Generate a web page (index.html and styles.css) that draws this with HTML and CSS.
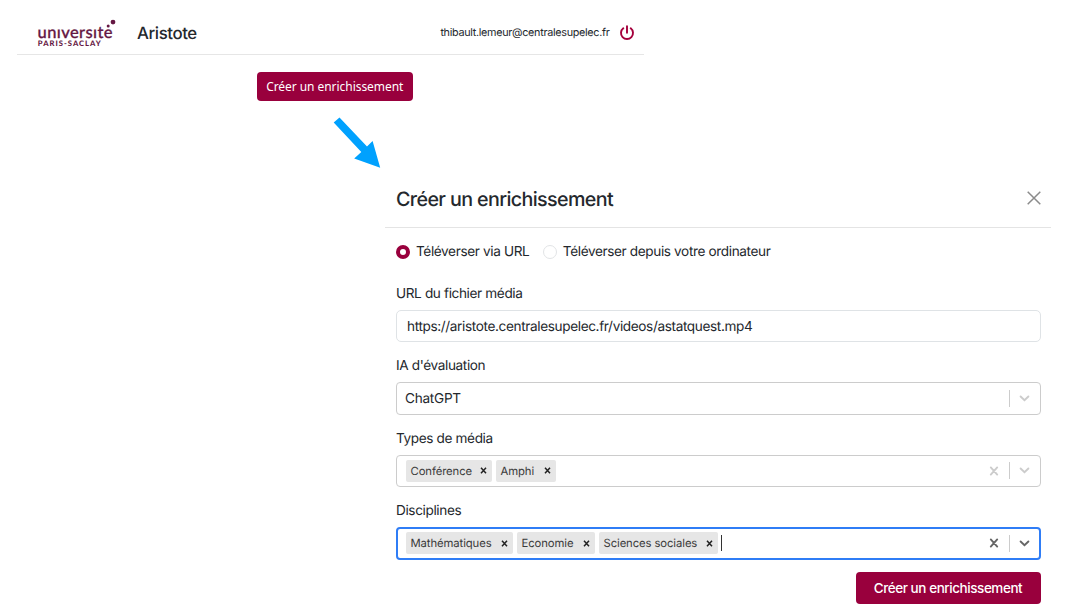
FILE: index.html
```html
<!DOCTYPE html>
<html lang="fr">
<head>
<meta charset="utf-8">
<title>Aristote</title>
<link rel="stylesheet" href="styles.css">
</head>
<body>
<section class="home">
  <header class="topbar">
    <svg class="logo" width="80" height="30" viewBox="0 0 80 30" role="img" aria-label="université Paris-Saclay">
      <text class="logo-name" x="0.5" y="20" textLength="75" lengthAdjust="spacing">unıversıte</text>
      <text class="logo-place" x="0.8" y="28" textLength="63" lengthAdjust="spacing">PARIS-SACLAY</text>
      <circle cx="76" cy="4.1" r="2.4"/>
      <circle cx="71.2" cy="8" r="1.5"/>
    </svg>
    <span class="brand">Aristote</span>
    <span class="email">thibault.lemeur@centralesupelec.fr</span>
    <svg class="power" width="16" height="16" viewBox="0 0 16 16"><path d="M8 1.2v6.6M4.3 3.3a6 6 0 1 0 7.4 0"/></svg>
  </header>
  <button class="btn btn-home" type="button"><span>Créer un enrichissement</span></button>
  <svg class="arrow" width="52" height="54" viewBox="0 0 52 54"><path d="M6.5 3.5l27.5 29 5.6-5.6L47.2 53.7 21.2 44.6 28.3 38 .7 8.5z"/></svg>
</section>

<section class="modal">
  <header class="modal-head">
    <h1>Créer un enrichissement</h1>
    <svg class="close" width="14" height="14" viewBox="0 0 14 14"><path d="M.7.7l12.6 12.6M13.3.7L.7 13.3"/></svg>
  </header>
  <form class="form">
    <div class="radios">
      <i class="radio checked"></i><span>Téléverser via URL</span>
      <i class="radio second"></i><span>Téléverser depuis votre ordinateur</span>
    </div>

    <label>URL du fichier média</label>
    <div class="field input"><span>https://aristote.centralesupelec.fr/videos/astatquest.mp4</span></div>

    <label>IA d'évaluation</label>
    <div class="field select">
      <span class="value">ChatGPT</span>
      <div class="tools"><i class="sep"></i><svg class="chev" width="11" height="7" viewBox="0 0 11 7"><path d="M1.6 1.5l3.9 3.6 3.9-3.6"/></svg></div>
    </div>

    <label>Types de média</label>
    <div class="field select">
      <div class="tag t1"><span>Conférence</span><svg width="7" height="7" viewBox="0 0 7 7"><path d="M1 .8l5 5.4M6 .8l-5 5.4"/></svg></div>
      <div class="tag t2"><span>Amphi</span><svg width="7" height="7" viewBox="0 0 7 7"><path d="M1 .8l5 5.4M6 .8l-5 5.4"/></svg></div>
      <div class="tools"><svg class="clear" width="10" height="10" viewBox="0 0 10 10"><path d="M1.8 1.4l6.4 7.2M8.2 1.4L1.8 8.6"/></svg><i class="sep"></i><svg class="chev" width="11" height="7" viewBox="0 0 11 7"><path d="M1.6 1.5l3.9 3.6 3.9-3.6"/></svg></div>
    </div>

    <label>Disciplines</label>
    <div class="field select focus">
      <div class="tag t3"><span>Mathématiques</span><svg width="7" height="7" viewBox="0 0 7 7"><path d="M1 .8l5 5.4M6 .8l-5 5.4"/></svg></div>
      <div class="tag t4"><span>Economie</span><svg width="7" height="7" viewBox="0 0 7 7"><path d="M1 .8l5 5.4M6 .8l-5 5.4"/></svg></div>
      <div class="tag t5"><span>Sciences sociales</span><svg width="7" height="7" viewBox="0 0 7 7"><path d="M1 .8l5 5.4M6 .8l-5 5.4"/></svg></div>
      <i class="caret"></i>
      <div class="tools"><svg class="clear" width="10" height="10" viewBox="0 0 10 10"><path d="M1.8 1.4l6.4 7.2M8.2 1.4L1.8 8.6"/></svg><i class="sep"></i><svg class="chev" width="11" height="7" viewBox="0 0 11 7"><path d="M1.6 1.5l3.9 3.6 3.9-3.6"/></svg></div>
    </div>
    <button class="btn btn-submit" type="button"><span>Créer un enrichissement</span></button>
  </form>
</section>
</body>
</html>
```
FILE: styles.css
```css
* { box-sizing: border-box; }
body {
  margin: 0;
  width: 1080px;
  height: 608px;
  overflow: hidden;
  background: #fff;
  color: #24282d;
  font: 13.6px/20px Inter, "Liberation Sans", sans-serif;
  letter-spacing: -0.37px;
  text-rendering: geometricPrecision;
  white-space: nowrap;
}
svg { display: block; flex: none; fill: none; }
i { display: block; flex: none; }

.home { position: relative; width: 661px; height: 174px; padding: 12px 17px 0; }
.topbar {
  display: flex;
  align-items: center;
  height: 43px;
  padding: 0 9.5px 0 20px;
  border-bottom: 1px solid #e6e6e6;
}
.logo { fill: #651743; align-self: flex-start; margin: 6px 0 0; letter-spacing: 0; }
.logo-name { font: 500 16.5px/1 Lato, sans-serif; stroke: #651743; stroke-width: 0.3; }
.logo-place { font: 900 7.6px/1 Lato, sans-serif; }
.brand { margin-left: 20px; padding-top: 1px; font-size: 16.8px; font-weight: 500; letter-spacing: -0.4px; }
.email { margin-left: auto; font-size: 10.8px; letter-spacing: -0.3px; }
.power { margin-left: 9px; stroke: #a5003c; stroke-width: 1.9; stroke-linecap: round; }

.btn {
  display: flex;
  align-items: center;
  justify-content: center;
  padding: 0;
  border: 0;
  border-radius: 4px;
  background: #99003d;
  color: #fff;
}
.btn-home { width: 156.5px; height: 28.5px; margin: 17.3px 0 0 239.5px; font: 12px "Noto Sans", sans-serif; letter-spacing: -0.05px; }
.arrow { position: absolute; left: 333px; top: 114px; fill: #00a1fe; }

.modal { width: 666px; margin-left: 385px; }
.modal-head {
  display: flex;
  align-items: center;
  justify-content: space-between;
  height: 54px;
  padding: 0 10px 5px 11px;
  border-bottom: 1px solid #e4e4e4;
}
h1 { margin: 0; padding-top: 1px; font-size: 19.7px; line-height: 26px; font-weight: 500; letter-spacing: -0.62px; }
.close { stroke: #8b8b8b; stroke-width: 1.5; }
.form { display: flex; flex-direction: column; padding: 13.5px 10px 0 11px; }
.radios { display: flex; align-items: center; height: 20px; margin-bottom: 22px; }
.radios span { padding-top: 1px; }
.radio { width: 14px; height: 14px; margin-right: 6px; border: 1px solid #e2e4e6; border-radius: 50%; }
.checked { border: 4px solid #99003d; }
.second { margin-left: 13.5px; }
label { height: 20px; margin-bottom: 6.4px; padding-top: 0.6px; }
.field {
  display: flex;
  align-items: center;
  height: 32.6px;
  margin-bottom: 13.4px;
  padding-left: 10px;
  border: 1px solid #ccc;
  border-radius: 4px;
}
.input { padding-top: 1.4px; border-color: #dfe3e6; border-radius: 5px; }
.select { padding-left: 9px; }
.value { margin-left: -1px; padding-top: 1px; letter-spacing: -0.26px; }
.focus { border: 2px solid #2f7df6; padding-left: 8px; margin-bottom: 12.5px; }
.tag {
  display: flex;
  align-items: center;
  justify-content: space-between;
  height: 22px;
  margin-right: 4px;
  padding: 0 5.5px 0 4.5px;
  border-radius: 2px;
  background: #e6e6e6;
  color: #3a3a3a;
  font-size: 11.3px;
  letter-spacing: -0.1px;
}
.tag svg { stroke: #222; stroke-width: 1.5; }
.t1 { width: 86px; }
.t2 { width: 60px; }
.t3 { width: 107px; }
.t4 { width: 78px; }
.t5 { width: 119px; }
.caret { width: 1px; height: 16px; margin-left: -1px; background: #333; }
.tools { display: flex; align-items: center; margin-left: auto; padding-right: 10px; color: #ccc; }
.focus .tools { padding-right: 9px; color: #666; }
.tools svg { stroke: currentColor; stroke-width: 1.9; stroke-linecap: round; }
.clear { margin-right: 10px; }
.sep { width: 1px; height: 17px; margin-right: 9.5px; background: #ccc; }
.btn-submit { align-self: flex-end; width: 185px; height: 32px; padding-right: 1px; font: 500 13.5px Inter, sans-serif; letter-spacing: -0.44px; }
```
